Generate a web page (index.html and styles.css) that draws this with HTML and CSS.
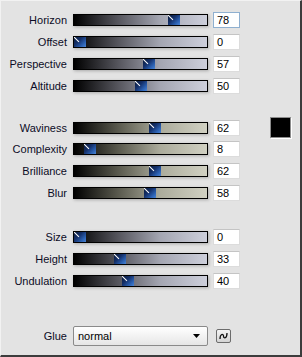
FILE: index.html
```html
<!DOCTYPE html>
<html lang="en">

<head>
    <meta charset="UTF-8">
    <meta name="viewport" content="width=device-width, initial-scale=1.0">
    <title>Wave settings</title>
    <link rel="stylesheet" href="styles.css">
</head>

<body>
    <div class="panel">
        <!-- horizon group -->
        <div class="group">
            <div class="row">
                <span class="label">Horizon</span>
                <div class="track" style="--v:78"><span class="thumb"></span></div>
                <span class="num focus">78</span>
            </div>
            <div class="row">
                <span class="label">Offset</span>
                <div class="track" style="--v:0"><span class="thumb"></span></div>
                <span class="num">0</span>
            </div>
            <div class="row">
                <span class="label">Perspective</span>
                <div class="track" style="--v:57"><span class="thumb"></span></div>
                <span class="num">57</span>
            </div>
            <div class="row">
                <span class="label">Altitude</span>
                <div class="track" style="--v:50"><span class="thumb"></span></div>
                <span class="num">50</span>
            </div>
        </div>

        <!-- wave group -->
        <div class="group group-wave">
            <div class="row">
                <span class="label">Waviness</span>
                <div class="track tan" style="--v:62"><span class="thumb"></span></div>
                <span class="num">62</span>
                <span class="swatch"></span>
            </div>
            <div class="row">
                <span class="label">Complexity</span>
                <div class="track tan" style="--v:8"><span class="thumb"></span></div>
                <span class="num">8</span>
            </div>
            <div class="row">
                <span class="label">Brilliance</span>
                <div class="track tan" style="--v:62"><span class="thumb"></span></div>
                <span class="num">62</span>
            </div>
            <div class="row">
                <span class="label">Blur</span>
                <div class="track tan" style="--v:58"><span class="thumb"></span></div>
                <span class="num">58</span>
            </div>
        </div>

        <!-- size group -->
        <div class="group group-size">
            <div class="row">
                <span class="label">Size</span>
                <div class="track" style="--v:0"><span class="thumb"></span></div>
                <span class="num">0</span>
            </div>
            <div class="row">
                <span class="label">Height</span>
                <div class="track" style="--v:33"><span class="thumb"></span></div>
                <span class="num">33</span>
            </div>
            <div class="row">
                <span class="label">Undulation</span>
                <div class="track" style="--v:40"><span class="thumb"></span></div>
                <span class="num">40</span>
            </div>
        </div>

        <div class="row glue-row">
            <span class="label">Glue</span>
            <div class="select">
                <span>normal</span>
                <svg class="arrow" width="7" height="4" viewBox="0 0 7 4"><path d="M0 0 H7 L3.5 4 Z" fill="#000"/></svg>
            </div>
            <span class="link-btn">
                <svg width="13" height="12" viewBox="0 0 13 12">
                    <path d="M3 9 C3 3.5 6.5 3.5 6.5 6 C6.5 8.8 10 8.8 10 3" fill="none" stroke="#111" stroke-width="1.3"/>
                </svg>
            </span>
        </div>
    </div>
</body>

</html>
```

FILE: styles.css
```css
body {
    margin: 0;
    font-family: "Liberation Sans", Arial, sans-serif;
    font-size: 11px;
}

.panel {
    width: 302px;
    height: 357px;
    box-sizing: border-box;
    background: #e3e3e3;
    border-top: 1px solid #f2f2f2;
    border-left: 1px solid #f2f2f2;
    border-right: 2px solid #3c3c3c;
    border-bottom: 2px solid #3c3c3c;
    padding-top: 11px;
    display: flex;
    flex-direction: column;
}

.group {
    display: flex;
    flex-direction: column;
    gap: 6px;
}

.group-wave {
    margin-top: 25px;
}

.group-size {
    margin-top: 28px;
}

.row {
    display: grid;
    grid-template-columns: 67px 135px 27px auto;
    column-gap: 5px;
    align-items: center;
    height: 16px;
}

.label {
    text-align: right;
    padding-right: 1px;
    color: #0c0c26;
    white-space: nowrap;
}

/* slider track */
.track {
    position: relative;
    height: 12px;
    box-sizing: border-box;
    border: 1px solid #000;
    background: linear-gradient(to right, #000 0%, #5a5a62 35%, #a4a6b2 65%, #cdcfdb 100%);
    box-shadow: 1px 1px 3px rgba(0, 0, 0, 0.25);
}

.track.tan {
    background: linear-gradient(to right, #000 0%, #5e5e52 35%, #acac9c 65%, #d0d0c2 100%);
}

.thumb {
    position: absolute;
    top: 0;
    left: calc((100% - 12px) * var(--v) / 100);
    width: 12px;
    height: 10px;
    background: linear-gradient(135deg, #0a1a38 0%, #14306a 40%, #2c62b4 75%, #4a84d4 100%);
    overflow: hidden;
}

/* white tick on thumb */
.thumb::before {
    content: "";
    position: absolute;
    left: -1px;
    top: 2px;
    width: 7px;
    height: 1px;
    background: #fff;
    transform: rotate(45deg);
}

.num {
    height: 16px;
    box-sizing: border-box;
    background: #fff;
    border: 1px solid #dcdcdc;
    border-top-color: #c4c4c4;
    padding-left: 3px;
    line-height: 14px;
    color: #000;
}

.num.focus {
    border-color: #8fb0d0;
}

.swatch {
    width: 19px;
    height: 19px;
    margin: -2px 0 -1px 25px;
    background: #000;
    border: 1px solid #8c8c8c;
    box-shadow: 1px 1px 0 #fff;
}

.glue-row {
    margin-top: 37px;
    height: 20px;
}

.select {
    height: 20px;
    box-sizing: border-box;
    border: 1px solid #8a8a8a;
    border-radius: 2px;
    background: linear-gradient(#ffffff, #e6e6e6);
    display: flex;
    align-items: center;
    justify-content: space-between;
    padding: 0 7px 0 4px;
    color: #000;
}

.link-btn {
    width: 15px;
    height: 14px;
    box-sizing: border-box;
    margin-left: 3px;
    border: 1px solid #6c6c6c;
    border-radius: 2px;
    background: linear-gradient(#f4f4f4, #d4d4d4);
    display: flex;
    align-items: center;
    justify-content: center;
}
```
